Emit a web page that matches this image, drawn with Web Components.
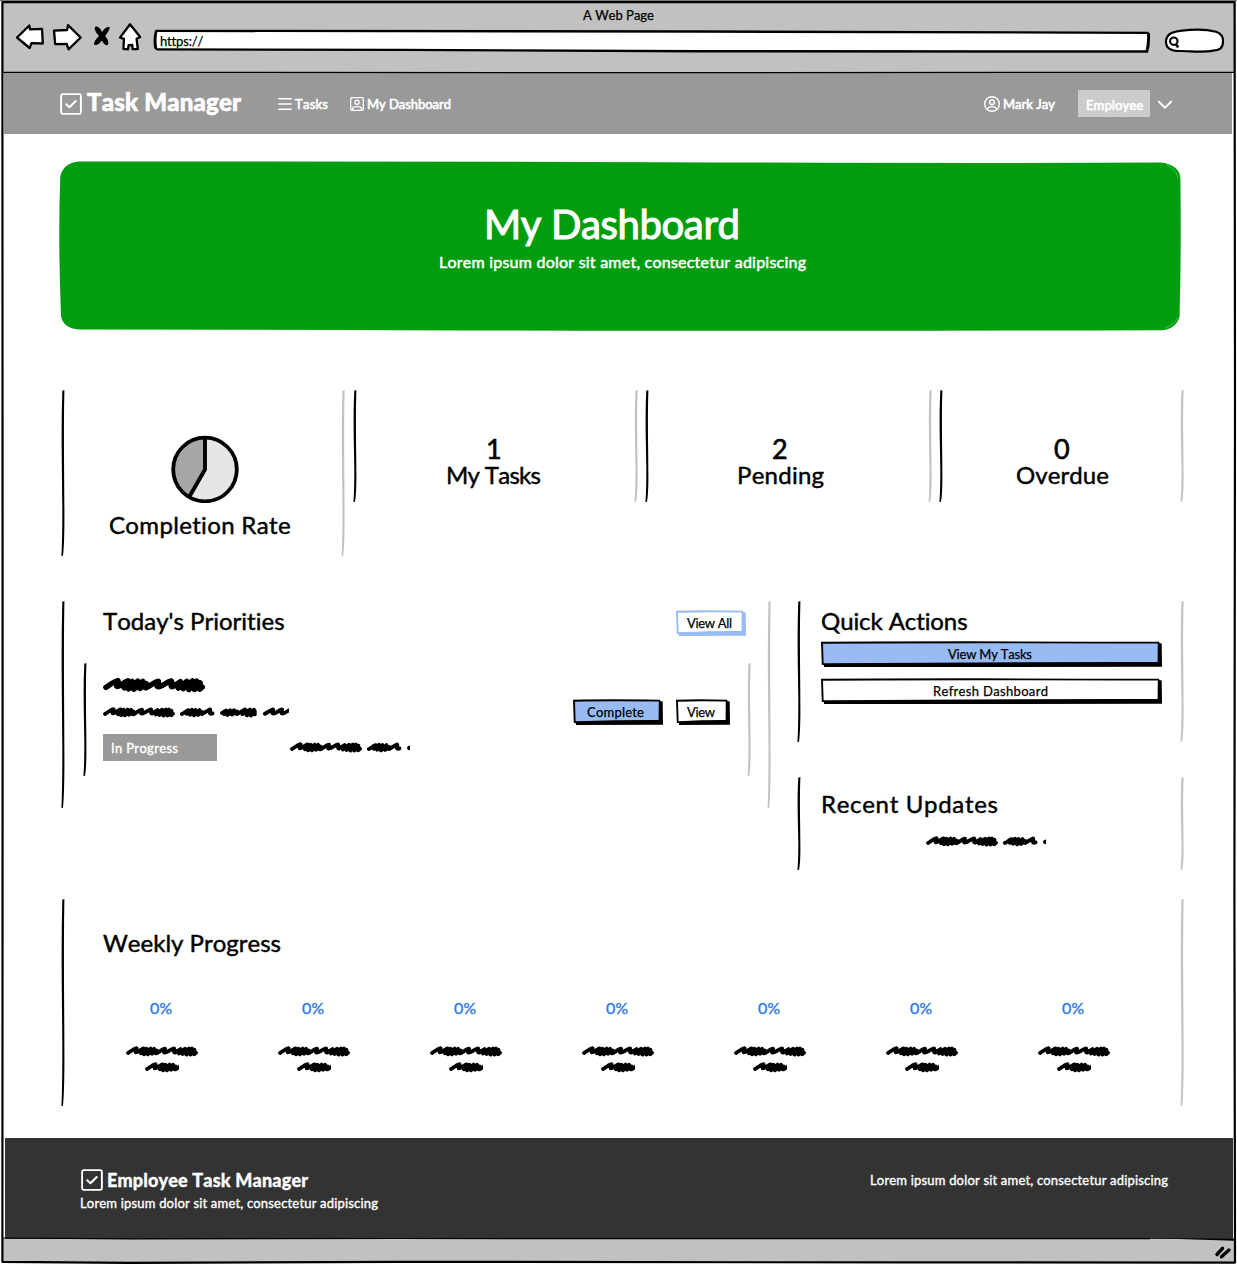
<!DOCTYPE html>
<html lang="en">
<head>
<meta charset="utf-8">
<title>A Web Page</title>
<style>
html,body{margin:0;padding:0;background:#fff}
body{width:1237px;height:1265px;overflow:hidden;font-family:Lato,"Liberation Sans",sans-serif;color:#000}
</style>
</head>
<body>
<app-window></app-window>
<script>
const shadow = (el, html) => { const r = el.attachShadow({mode:'open'}); r.innerHTML = html; return r; };
const num = (el, name, d) => el.hasAttribute(name) ? parseFloat(el.getAttribute(name)) : d;

/* Single line of text set to an exact measure through letter spacing. */
customElements.define('hand-text', class extends HTMLElement {
  connectedCallback() {
    if (this.shadowRoot) return;
    const w = num(this,'w',50), s = num(this,'size',13), h = num(this,'h',20), b = this.hasAttribute('bold');
    const stroke = num(this,'stroke', s > 30 ? 1.1 : s > 20 ? .45 : .35);
    const r = shadow(this, `<style>
      :host{display:block;flex:none;width:${w}px;height:${h}px}
      span{display:inline-block;white-space:nowrap;font-size:${s}px;line-height:${h}px;font-weight:${b?900:400};font-kerning:none;
      -webkit-text-stroke:${stroke}px currentColor}
    </style><span></span>`);
    const span = r.querySelector('span'), t = this.getAttribute('text');
    span.textContent = t;
    if (t.length > 1) {
      const nat = span.getBoundingClientRect().width;
      span.style.letterSpacing = ((w - nat) / (t.length - 1)).toFixed(3) + 'px';
    }
  }
});

/* Scribbled placeholder words, cut at the given width. */
customElements.define('scribble-line', class extends HTMLElement {
  connectedCallback() {
    if (this.shadowRoot) return;
    const w = num(this,'w',72), k = num(this,'scale',1), H = 12 * k;
    shadow(this, `<style>:host{display:block;flex:none;width:${w}px;height:${H}px}svg{display:block;overflow:hidden}</style>
    <svg width="${w}" height="${H}"><g transform="scale(${k}) translate(0 .4)" fill="none" stroke="#000" stroke-width="3.8" stroke-linecap="round" stroke-linejoin="round">
      <path d="M2 7.6C4 6.6 7 3.6 10.5 2.8C11.5 3.7 8.5 6.5 10 7C12 7 14.5 4 17.5 3L15 8L20.5 3.4L18 8.8L24.5 3.2L21.8 9L28 3.4L26 8.4L30.5 5L30 8C33 7 36 3.6 39 3.2C39.5 4.5 36.5 7 39 7.2C42 7 45 3.6 48 3C49.5 4 46.5 6.8 49 7.2L54.5 3.6L53 8.2L59 3.4L56.5 8.6L63 3L60.5 9.2L66 3.2L64.5 9.2L68.5 4.4L68.2 9L70 7.4"/>
      <path d="M78.8 7.6C81 7 83 4.4 85.5 3.8L84 7.5L89 3.4L87 8.4L92.5 3.6L91 9L96.5 3.6L95 8.6L99 5.6L99 7.6L107 3C108.5 4 105 7.2 108 7.4L109.6 7"/>
      <path d="M119 6.6L123 4.2L121.4 7.8L127 3.8L124.5 8.6L131 3.8L129 8.2L134 5L134 7.8L142 3L139.5 7.8L147 3.2L143.8 9L151 3.4L148 9.2L151.8 4.6L151.8 8"/>
      <path d="M161.8 7.4C164 6.8 167 3.6 170 3C171 4 167.5 7 170.5 7.2C173 7 176 3.6 179 3C180 4 176.5 7 179.5 7.2C182 7 185 4 188 3"/>
    </g></svg>`);
  }
});

/* Content area bracketed by a dark and a light hand-drawn edge. */
customElements.define('sketch-card', class extends HTMLElement {
  connectedCallback() {
    if (this.shadowRoot) return;
    const w = num(this,'w',280), h = num(this,'h',100);
    const edge = x => `M${x+.9} .6L${x+3} .2L${x+2.7} ${h*.1}C${x+2.2} ${h*.35} ${x+3.1} ${h*.6} ${x+3} ${h*.8}Q${x+2.8} ${h*.95} ${x+1.5} ${h}L${x} ${h-.2}Q${x+1} ${h*.9} ${x+.9} ${h*.7}C${x+.7} ${h*.5} ${x-.5} ${h*.25} ${x+.9} .6Z`;
    shadow(this, `<style>:host{display:flex;flex-direction:column;flex:none;position:relative;box-sizing:border-box;width:${w}px;height:${h}px}
      svg.edges{position:absolute;left:0;top:0;overflow:visible;pointer-events:none}</style>
      <svg class="edges" width="${w}" height="${h}"><path fill="#000" d="${edge(-.6)}"/><path fill="#c1c1c1" d="${edge(w-3.4)}"/></svg><slot></slot>`);
  }
});

customElements.define('sketch-button', class extends HTMLElement {
  connectedCallback() {
    if (this.shadowRoot) return;
    const w = num(this,'w',70), h = num(this,'h',26), tw = num(this,'tw',40), pl = num(this,'tx',11);
    const fill = this.getAttribute('fill') || '#fff', line = this.getAttribute('line') || '#000';
    shadow(this, `<style>:host{display:flex;flex:none;position:relative;box-sizing:border-box;width:${w}px;height:${h}px;padding-left:${pl}px}
      svg{position:absolute;left:0;top:0}hand-text{position:relative}</style>
      <svg width="${w}" height="${h}">
        <path fill="${line}" d="M0 .8Q${w*.4} -.1 ${w-3} .8L${w-2.6} 2L${w-.3} 2.4L${w} ${h-.2}L3 ${h}L3 ${h-1.7}L.8 ${h-2.2}Z"/>
        <path fill="${fill}" d="M2 2.7Q${w*.4} 1.9 ${w-4.2} 2.6L${w-4.4} ${h-5}Q${w*.55} ${h-5.2} 2.6 ${h-3.8}Z"/>
      </svg><hand-text text="${this.getAttribute('label')}" w="${tw}" h="${h}" stroke=".25"></hand-text>`);
  }
});

const ICONS = {
  check: [22,22,`<rect x="1.1" y="1.1" width="19.8" height="19.8" rx="1.8" stroke-width="1.9"/><path d="M6.2 11.2L9.5 14.3L15.7 8" stroke-width="2"/>`],
  list: [14,14,`<path d="M.3 1.8H13.7M.3 7H13.7M.3 12.2H13.7" stroke-width="1.5" stroke-linecap="butt"/>`],
  badge: [14,14,`<rect x=".7" y=".7" width="12.6" height="12.6" rx="1" stroke-width="1.3"/><circle cx="7" cy="5.3" r="2.1" stroke-width="1.3"/><path d="M2.6 12.8V11.4Q2.8 9.6 7 9.6T11.4 11.4V12.8" stroke-width="1.3"/>`],
  person: [16,16,`<circle cx="8" cy="8" r="7.3" stroke-width="1.4"/><circle cx="8" cy="6.2" r="2.3" stroke-width="1.4"/><path d="M3.6 13.2Q4 10.6 8 10.6T12.4 13.2" stroke-width="1.4"/>`],
  chevron: [16,10,`<path d="M1.8 1.6L8 7.8L14.2 1.6" stroke-width="2"/>`]
};
customElements.define('line-icon', class extends HTMLElement {
  connectedCallback() {
    if (this.shadowRoot) return;
    const [w,h,d] = ICONS[this.getAttribute('name')];
    shadow(this, `<style>:host{display:block;flex:none;width:${w}px;height:${h}px}svg{display:block}</style>
      <svg width="${w}" height="${h}" fill="none" stroke="currentColor" stroke-linecap="round" stroke-linejoin="round">${d}</svg>`);
  }
});

customElements.define('browser-chrome', class extends HTMLElement {
  connectedCallback() {
    shadow(this, `<style>
      :host{display:flex;flex-direction:column;height:73px;background:#c1c1c1;flex:none}
      .title{display:flex;padding:4px 0 0 583px;height:20px;box-sizing:border-box}
      .bar{display:flex;align-items:flex-start}
      svg{display:block;flex:none;overflow:visible}
      .url{width:998px;height:24px;display:grid}
      .url>*{grid-area:1/1}.url hand-text{margin:2px 0 0 7px}
      .search{margin-left:13px}
    </style>
    <div class="title"><hand-text text="A Web Page" w="71" h="19" stroke=".25"></hand-text></div>
    <div class="bar">
      <svg width="153" height="36" viewBox="0 20 153 36" fill="#fff" stroke="#000" stroke-width="2.3" stroke-linejoin="round">
        <path d="M17 37.5L29.3 25.5L30 29.3L42 28.8L42.8 43.5L31.5 43.2L29.6 48Z"/>
        <path d="M54 30.7L67 30L68 25.2L80.7 37.5L68.5 49.3L66.7 43.8L55.2 44.2Z"/>
        <path d="M130 24.3L140.2 37L136.6 38.8L137.8 49L132.6 49.2L132.3 45L128.6 45.2L128 49.3L123.4 48.8L124 38.8L120 37.6Z"/>
        <path fill="#000" stroke="none" d="M95.5 26.5C98 26 100.8 29 102.2 32C103.5 29.5 106.5 26.2 109.8 27.2C109.5 30 107 33.5 105.2 36C107.5 39 109.5 42 107.7 45C105 46 103 42.5 101.8 40.5C100.2 43 97 46.3 94.1 44.4C93.5 42 97 38.3 99 35.8C96.3 33 93.2 28.5 95.5 26.5Z"/>
      </svg>
      <div class="url"><svg width="998" height="36" viewBox="153 20 998 36">
        <path fill="#000" d="M156 29.7L700 30.2L1148 31.8L1150 33.5Q1150.5 45 1148 52.8L700 52.5L400 51L157 50.4L154.3 48.6Q152.6 40 154.8 31Z"/>
        <path fill="#fff" d="M157.3 32L700 32.7L1147 34Q1147.5 43 1145.7 50.2L700 50L400 48.8L157.2 48.2Q155.8 40 157.3 32Z"/></svg>
        <hand-text text="https://" w="43" h="38" stroke=".25"></hand-text></div>
      <svg class="search" width="62" height="36" viewBox="1164 20 62 36" fill="#fff" stroke="#000" stroke-width="2.2">
        <path d="M1166 42C1166 33 1174 31.5 1182 30.6C1195 29 1207 29.3 1216 31.7C1221 33.3 1223.5 37 1223 42C1223 48.5 1219 50 1213 50.7C1203 52.7 1191 51 1180 51C1171 51.3 1166 48 1166 42Z"/>
        <circle cx="1173.8" cy="41.2" r="3.7" stroke-width="2.1"/><path d="M1175.5 44L1178.3 47.4" stroke-width="2.6"/>
      </svg>
    </div>`);
  }
});

customElements.define('app-nav', class extends HTMLElement {
  connectedCallback() {
    shadow(this, `<style>
      :host{display:flex;align-items:center;height:61px;margin:0 5px 0 4px;background:#999;color:#fff;flex:none;padding-left:56px;box-sizing:border-box}
      .tag{display:flex;align-items:center;background:#ccc;width:72px;height:27px;box-sizing:border-box;padding-left:8px;margin-left:23px}
      .a{margin-left:5px;margin-top:-3px}.n{margin:-2px 0 0 3px}
    </style>
    <line-icon name="check"></line-icon><hand-text class="a" text="Task Manager" bold w="154" size="24" h="34" stroke=".6"></hand-text>
    <line-icon name="list" style="margin-left:37px"></line-icon><hand-text class="n" text="Tasks" w="33" stroke=".6"></hand-text>
    <line-icon name="badge" style="margin-left:22px"></line-icon><hand-text class="n" text="My Dashboard" w="84" stroke=".6"></hand-text>
    <line-icon name="person" style="margin-left:533px"></line-icon><hand-text class="n" text="Mark Jay" w="52" stroke=".6"></hand-text>
    <div class="tag"><hand-text text="Employee" w="57" stroke=".6"></hand-text></div>
    <line-icon name="chevron" style="margin-left:7px;margin-top:3px"></line-icon>`);
  }
});

customElements.define('hero-banner', class extends HTMLElement {
  connectedCallback() {
    shadow(this, `<style>
      :host{display:grid;width:1122px;height:170px;color:#fff;flex:none}
      svg,.t{grid-area:1/1}.t{display:flex;flex-direction:column;padding-top:39px}
    </style>
    <svg width="1122" height="170"><path fill="#009e0f" d="M20 .6Q300 0 600 1.2T1102 1.6Q1121 4 1121.4 18Q1122.4 90 1120.5 156Q1117 168 1103 169.2Q600 170.5 300 169L20 168.6Q4 167 2 155Q-1 80 1.2 16Q4 2 20 .6Z"/>
    <path fill="none" stroke="#fff" stroke-width=".6" opacity=".45" d="M1107 4Q1118 8 1119 18M1106 167Q1116 164 1119 156"/></svg>
    <div class="t"><hand-text text="My Dashboard" w="256" size="40" h="48" style="margin-left:425px"></hand-text>
    <hand-text text="Lorem ipsum dolor sit amet, consectetur adipiscing" w="367" size="16" h="24" stroke=".5" style="margin:2px 0 0 380px"></hand-text></div>`);
  }
});

customElements.define('stat-card', class extends HTMLElement {
  connectedCallback() {
    const a = k => this.getAttribute(k);
    shadow(this, `<style>:host{display:block;flex:none}</style>
    <sketch-card w="${a('w')}" h="112"><hand-text text="${a('value')}" w="16" size="27" h="26" stroke=".6" style="margin:46px 0 0 ${a('vx')}px"></hand-text>
    <hand-text text="${a('label')}" w="${a('tw')}" size="24" h="26" style="margin-left:${a('tx')}px"></hand-text></sketch-card>`);
  }
});

customElements.define('day-progress', class extends HTMLElement {
  connectedCallback() {
    shadow(this, `<style>:host{display:flex;flex-direction:column;width:152px;flex:none}</style>
    <hand-text text="0%" w="22" size="16" h="22" style="color:#2b78e4;margin-left:24px"></hand-text>
    <scribble-line w="72" style="margin-top:26px"></scribble-line>
    <scribble-line w="34" style="margin:4px 0 0 19px"></scribble-line>`);
  }
});

customElements.define('app-footer', class extends HTMLElement {
  connectedCallback() {
    shadow(this, `<style>
      :host{display:flex;height:101px;margin:0 4px 0 5px;background:#333;color:#fff;flex:none;box-sizing:border-box;padding:31px 0 0 75px}
      .row{display:flex;align-items:center;height:22px}.l{width:790px}
    </style>
    <div class="l"><div class="row"><line-icon name="check" style="margin-left:1px"></line-icon><hand-text text="Employee Task Manager" bold w="201" size="18" h="22" stroke=".3" style="margin-left:4px"></hand-text></div>
    <hand-text text="Lorem ipsum dolor sit amet, consectetur adipiscing" w="298" h="24"></hand-text></div>
    <hand-text text="Lorem ipsum dolor sit amet, consectetur adipiscing" w="298" h="22"></hand-text>`);
  }
});

customElements.define('dashboard-page', class extends HTMLElement {
  connectedCallback() {
    const days = '<day-progress></day-progress>'.repeat(7);
    shadow(this, `<style>
      :host{display:flex;flex-direction:column;height:1004px;flex:none;box-sizing:border-box;padding:27px 0 0 59px}
      .row{display:flex;align-items:flex-start;flex:none}
      .stats{margin:59px 0 0 3px;height:166px}
      .panels{margin:45px 0 0 3px;height:269px;gap:27px}
      .right{display:flex;flex-direction:column;gap:35px}
      .tag{display:flex;align-items:center;width:114px;height:27px;background:#999;color:#fff;box-sizing:border-box;padding-left:8px}
    </style>
    <hero-banner></hero-banner>
    <div class="row stats">
      <sketch-card w="283" h="166">
        <svg width="68" height="68" viewBox="0 0 68 68" style="margin:45px 0 0 109px;flex:none">
          <circle cx="34" cy="34.5" r="31.8" fill="#e6e6e6"/><path fill="#a6a6a6" d="M34 34.5V2.7A31.8 31.8 0 0 0 18.2 62Z"/>
          <circle cx="34" cy="34.5" r="31.8" fill="none" stroke="#000" stroke-width="3.8"/><path d="M34 3V34.5L18.2 62" fill="none" stroke="#000" stroke-width="3.9"/></svg>
        <hand-text text="Completion Rate" w="182" size="24" h="30" style="margin:7px 0 0 47px"></hand-text>
      </sketch-card>
      <stat-card w="284" value="1" label="My Tasks" vx="132" tw="95" tx="92" style="margin-left:9px"></stat-card>
      <stat-card w="286" value="2" label="Pending" vx="126" tw="87" tx="91" style="margin-left:8px"></stat-card>
      <stat-card w="244" value="0" label="Overdue" vx="114" tw="93" tx="76" style="margin-left:8px"></stat-card>
    </div>
    <div class="row panels">
      <sketch-card w="709" h="207">
        <div class="row" style="padding:9px 0 0 41px;height:62px;box-sizing:border-box">
          <hand-text text="Today's Priorities" w="182" size="24" h="22"></hand-text>
          <sketch-button label="View All" w="70" h="26" tw="45" tx="11" line="#97bbf2" style="margin-left:391px"></sketch-button>
        </div>
        <sketch-card w="667" h="113" style="margin-left:22px">
          <div class="row" style="padding:13px 0 0 19px;height:36px;box-sizing:border-box"><scribble-line w="102" scale="1.42"></scribble-line></div>
          <div class="row" style="padding-left:19px;height:35px">
            <scribble-line w="186" style="margin-top:7px"></scribble-line>
            <sketch-button label="Complete" w="90" h="26" tw="57" tx="14" fill="#97bbf2" style="margin-left:284px"></sketch-button>
            <sketch-button label="View" w="54" h="26" tw="28" tx="11" style="margin-left:13px"></sketch-button>
          </div>
          <div class="row" style="padding-left:19px">
            <div class="tag"><hand-text text="In Progress" w="67" h="27" stroke=".4" style="margin-top:2px"></hand-text></div>
            <scribble-line w="120" style="margin:7px 0 0 73px"></scribble-line>
          </div>
        </sketch-card>
      </sketch-card>
      <div class="right">
        <sketch-card w="386" h="141">
          <hand-text text="Quick Actions" w="147" size="24" h="30" style="margin:5px 0 0 23px"></hand-text>
          <sketch-button label="View My Tasks" w="341" h="26" tw="84" tx="127" fill="#97bbf2" style="margin:5px 0 0 23px"></sketch-button>
          <sketch-button label="Refresh Dashboard" w="341" h="26" tw="115" tx="112" style="margin:11px 0 0 23px"></sketch-button>
        </sketch-card>
        <sketch-card w="386" h="93">
          <hand-text text="Recent Updates" w="177" size="24" h="30" style="margin:12px 0 0 23px"></hand-text>
          <scribble-line w="120" style="margin:16px 0 0 128px"></scribble-line>
        </sketch-card>
      </div>
    </div>
    <sketch-card w="1122" h="207" style="margin:29px 0 0 3px">
      <hand-text text="Weekly Progress" w="178" size="24" h="30" style="margin:29px 0 0 41px"></hand-text>
      <div class="row" style="margin:39px 0 0 64px">${days}</div>
    </sketch-card>`);
  }
});

customElements.define('app-window', class extends HTMLElement {
  connectedCallback() {
    shadow(this, `<style>
      :host{display:flex;flex-direction:column;width:1237px;height:1265px;position:relative;background:#fff;overflow:hidden}
      .status{height:24px;background:#c1c1c1;flex:none}
      .frame{position:absolute;left:0;top:0;pointer-events:none}
    </style>
    <browser-chrome></browser-chrome><app-nav></app-nav><dashboard-page></dashboard-page><app-footer></app-footer>
    <div class="status"></div>
    <svg class="frame" width="1237" height="1265" fill="none" stroke="#000">
      <path stroke="#fff" stroke-width="2" d="M.8 0V1265M1236.6 0V1265"/>
      <path stroke="#fff" stroke-width="1.6" d="M0 1264.4H1237"/>
      <path stroke="#777" stroke-width="1.2" d="M0 .6H1237"/>
      <path stroke-width="2.2" stroke-linejoin="round" d="M2.4 2.2H1234.6L1235 400L1234.4 900L1235 1262.6L900 1262.4L400 1261.8L130 1262.8L2.4 1261.8L2.6 700Z"/>
      <path stroke-width="1.2" d="M3 72.3L600 72.6L1234 72.4"/>
      <path stroke-width="1.2" d="M3 1238L130 1238.8L400 1238.5L1150 1238.7"/>
      <path fill="#000" stroke="none" d="M1148 1237.9L1234 1238.8V1240.8Z"/>
      <path stroke-width="3.4" stroke-linecap="round" d="M1217 1254.5L1222.5 1248.3M1221.5 1256.8L1229 1250"/>
    </svg>`);
  }
});
</script>
</body>
</html>
